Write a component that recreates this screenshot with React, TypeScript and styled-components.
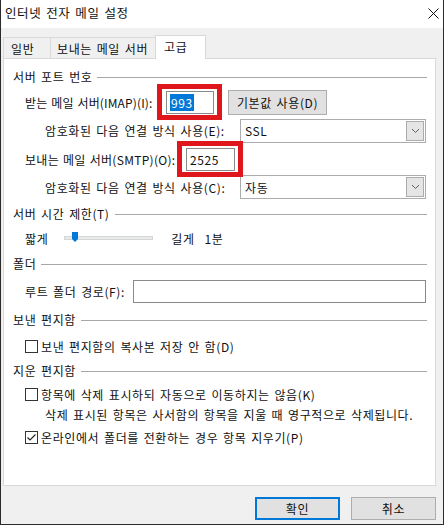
import React from 'react';
import styled, { createGlobalStyle } from 'styled-components';

const Global = createGlobalStyle`
  html, body { margin: 0; padding: 0; background: #f0f0f0; }
  body {
    font-family: "Noto Sans CJK KR", "Noto Sans", sans-serif;
    font-size: 12px;
    letter-spacing: 0.6px;
    word-spacing: 1.5px;
    color: #111;
  }
  * { box-sizing: border-box; }
`;

const Window = styled.div`
  width: 444px;
  height: 525px;
  border: 1px solid #2b2b2b;
  border-top: none;
  background: #f0f0f0;
  display: flex;
  flex-direction: column;
`;

const TitleBar = styled.div`
  height: 28px;
  flex: none;
  background: #fff;
  display: flex;
  align-items: center;
  justify-content: space-between;
  padding: 0 4px 2px 4px;
`;

const TitleText = styled.span`
  font-size: 12.5px;
  line-height: 1;
`;

const Body = styled.div`
  flex: 1;
  padding: 7px 7px 0 2px;
  display: flex;
  flex-direction: column;
`;

const TabStrip = styled.div`
  height: 23px;
  display: flex;
  align-items: flex-end;
`;

const Tab = styled.div<{ $w: number; $active?: boolean; $pl: number }>`
  position: relative;
  z-index: ${(p) => (p.$active ? 2 : 1)};
  width: ${(p) => p.$w}px;
  height: ${(p) => (p.$active ? 24 : 21)}px;
  margin-bottom: ${(p) => (p.$active ? -1 : 0)}px;
  margin-left: -1px;
  &:first-child { margin-left: 0; }
  padding-left: ${(p) => p.$pl}px;
  padding-bottom: ${(p) => (p.$active ? 2 : 0)}px;
  display: flex;
  align-items: center;
  border: 1px solid #d9d9d9;
  border-bottom: none;
  background: ${(p) => (p.$active ? '#fff' : '#f0f0f0')};
  white-space: nowrap;
`;

const Panel = styled.div`
  height: 428px;
  flex: none;
  background: #fff;
  border: 1px solid #d9d9d9;
  padding: 8px 8px 0 9px;
  display: flex;
  flex-direction: column;
`;

const GroupHeading = styled.div<{ $mt?: number }>`
  height: 18px;
  margin-top: ${(p) => p.$mt ?? 0}px;
  display: flex;
  align-items: center;
  white-space: nowrap;
  &::after {
    content: '';
    flex: 1;
    height: 1px;
    margin-left: 5px;
    margin-top: 2px;
    background: #a8a8a8;
  }
`;

const Row = styled.div<{ $h: number; $mt?: number; $indent: number }>`
  height: ${(p) => p.$h}px;
  margin-top: ${(p) => p.$mt ?? 0}px;
  margin-left: ${(p) => p.$indent}px;
  display: flex;
  align-items: center;
  white-space: nowrap;
`;

const Label = styled.span<{ $w?: number; $ls?: number }>`
  flex: none;
  width: ${(p) => (p.$w ? `${p.$w}px` : 'auto')};
  ${(p) => (p.$ls !== undefined ? `letter-spacing: ${p.$ls}px; word-spacing: 1px;` : '')}
`;

const Marked = styled.span`
  position: relative;
  display: inline-flex;
`;

const RedBox = styled.span`
  position: absolute;
  top: -7px;
  bottom: -6px;
  left: -9px;
  right: -8px;
  border: 5px solid #e0161d;
  pointer-events: none;
`;

const TextBox = styled.div<{ $w: number }>`
  width: ${(p) => p.$w}px;
  height: 23px;
  border: 1px solid #8a8a8a;
  background: #fff;
  padding-left: 3px;
  display: flex;
  align-items: center;
`;

const Selected = styled.span`
  background: #0078d7;
  color: #fff;
  line-height: 17px;
  padding: 0 1px;
`;

const PushButton = styled.div<{ $w: number; $ml?: number }>`
  width: ${(p) => p.$w}px;
  height: 25px;
  margin-left: ${(p) => p.$ml ?? 0}px;
  background: #e1e1e1;
  border: 1px solid #adadad;
  display: flex;
  align-items: center;
  justify-content: center;
  white-space: nowrap;
`;

const FooterButton = styled.div<{ $default?: boolean }>`
  width: 85px;
  height: 23px;
  background: #e1e1e1;
  border: ${(p) => (p.$default ? '2px solid #0078d7' : '1px solid #adadad')};
  display: flex;
  align-items: center;
  justify-content: center;
`;

const Combo = styled.div`
  width: 186px;
  height: 24px;
  border: 1px solid #acacac;
  background: #fff;
  display: flex;
  align-items: center;
  justify-content: space-between;
  padding: 1px 1px 1px 4px;
`;

const ComboArrow = styled.div`
  width: 18px;
  height: 20px;
  background: #e5e5e5;
  border: 1px solid #acacac;
  display: flex;
  align-items: center;
  justify-content: center;
`;

const SliderTrack = styled.div`
  position: relative;
  width: 89px;
  height: 4px;
  margin: 0 18px 0 16px;
  background: #e7eaea;
  border: 1px solid #d6d6d6;
`;

const SliderThumb = styled.svg`
  position: absolute;
  left: 7px;
  top: -5px;
`;

const Gap = styled.span<{ $w: number }>`
  display: inline-block;
  width: ${(p) => p.$w}px;
`;

const CheckBox = styled.span`
  flex: none;
  width: 13px;
  height: 13px;
  border: 1px solid #333;
  background: #fff;
  margin-right: 3px;
  display: flex;
  align-items: center;
  justify-content: center;
`;

const Footer = styled.div`
  display: flex;
  justify-content: flex-end;
  gap: 11px;
  padding-top: 11px;
`;

const Chevron = () => (
  <svg width="9" height="6" viewBox="0 0 9 6">
    <path d="M1 1 L4.5 4.5 L8 1" fill="none" stroke="#606060" strokeWidth="1" />
  </svg>
);

const Check = ({ checked }: { checked?: boolean }) => (
  <CheckBox>
    {checked && (
      <svg width="11" height="11" viewBox="0 0 11 11">
        <path d="M1.5 5.5 L4 8 L9.5 2.5" fill="none" stroke="#222" strokeWidth="1.2" />
      </svg>
    )}
  </CheckBox>
);

export default function App() {
  return (
    <>
      <Global />
      <Window>
        <TitleBar>
          <TitleText>인터넷 전자 메일 설정</TitleText>
          <svg width="11" height="11" viewBox="0 0 11 11">
            <path d="M0.5 0.5 L10.5 10.5 M10.5 0.5 L0.5 10.5" stroke="#111" strokeWidth="1" />
          </svg>
        </TitleBar>
        <Body>
          <TabStrip>
            <Tab $w={48} $pl={7}>일반</Tab>
            <Tab $w={106} $pl={6}>보내는 메일 서버</Tab>
            <Tab $w={51} $pl={8} $active>고급</Tab>
          </TabStrip>
          <Panel>
            <GroupHeading>서버 포트 번호</GroupHeading>
            <Row $h={28} $mt={3} $indent={12}>
              <Label $w={141} $ls={0.15}>받는 메일 서버(IMAP)(I):</Label>
              <Marked>
                <TextBox $w={48}>
                  <Selected>993</Selected>
                </TextBox>
                <RedBox />
              </Marked>
              <PushButton $w={99} $ml={14}>기본값 사용(D)</PushButton>
            </Row>
            <Row $h={29} $indent={32}>
              <Label $w={195}>암호화된 다음 연결 방식 사용(E):</Label>
              <Combo>
                <span>SSL</span>
                <ComboArrow>
                  <Chevron />
                </ComboArrow>
              </Combo>
            </Row>
            <Row $h={28} $indent={12}>
              <Label $w={161} $ls={0.3}>보내는 메일 서버(SMTP)(O):</Label>
              <Marked>
                <TextBox $w={49}>2525</TextBox>
                <RedBox />
              </Marked>
            </Row>
            <Row $h={28} $indent={32}>
              <Label $w={195}>암호화된 다음 연결 방식 사용(C):</Label>
              <Combo>
                <span>자동</span>
                <ComboArrow>
                  <Chevron />
                </ComboArrow>
              </Combo>
            </Row>

            <GroupHeading $mt={3}>서버 시간 제한(T)</GroupHeading>
            <Row $h={32} $indent={12}>
              <Label>짧게</Label>
              <SliderTrack>
                <SliderThumb width="6" height="10" viewBox="0 0 6 10">
                  <path d="M0 0 H6 V7 L3 10 L0 7 Z" fill="#0078d7" />
                </SliderThumb>
              </SliderTrack>
              <Label>길게</Label>
              <Gap $w={10} />
              <Label>1분</Label>
            </Row>

            <GroupHeading>폴더</GroupHeading>
            <Row $h={38} $indent={12}>
              <Label $w={108}>루트 폴더 경로(F):</Label>
              <TextBox $w={293} />
            </Row>

            <GroupHeading>보낸 편지함</GroupHeading>
            <Row $h={28} $mt={4} $indent={12}>
              <Check />
              <Label>보낸 편지함의 복사본 저장 안 함(D)</Label>
            </Row>

            <GroupHeading $mt={1}>지운 편지함</GroupHeading>
            <Row $h={20} $mt={5} $indent={12}>
              <Check />
              <Label>항목에 삭제 표시하되 자동으로 이동하지는 않음(K)</Label>
            </Row>
            <Row $h={20} $indent={32}>
              <Label>삭제 표시된 항목은 사서함의 항목을 지울 때 영구적으로 삭제됩니다.</Label>
            </Row>
            <Row $h={20} $mt={3} $indent={12}>
              <Check checked />
              <Label>온라인에서 폴더를 전환하는 경우 항목 지우기(P)</Label>
            </Row>
          </Panel>
          <Footer>
            <FooterButton $default>확인</FooterButton>
            <FooterButton>취소</FooterButton>
          </Footer>
        </Body>
      </Window>
    </>
  );
}
